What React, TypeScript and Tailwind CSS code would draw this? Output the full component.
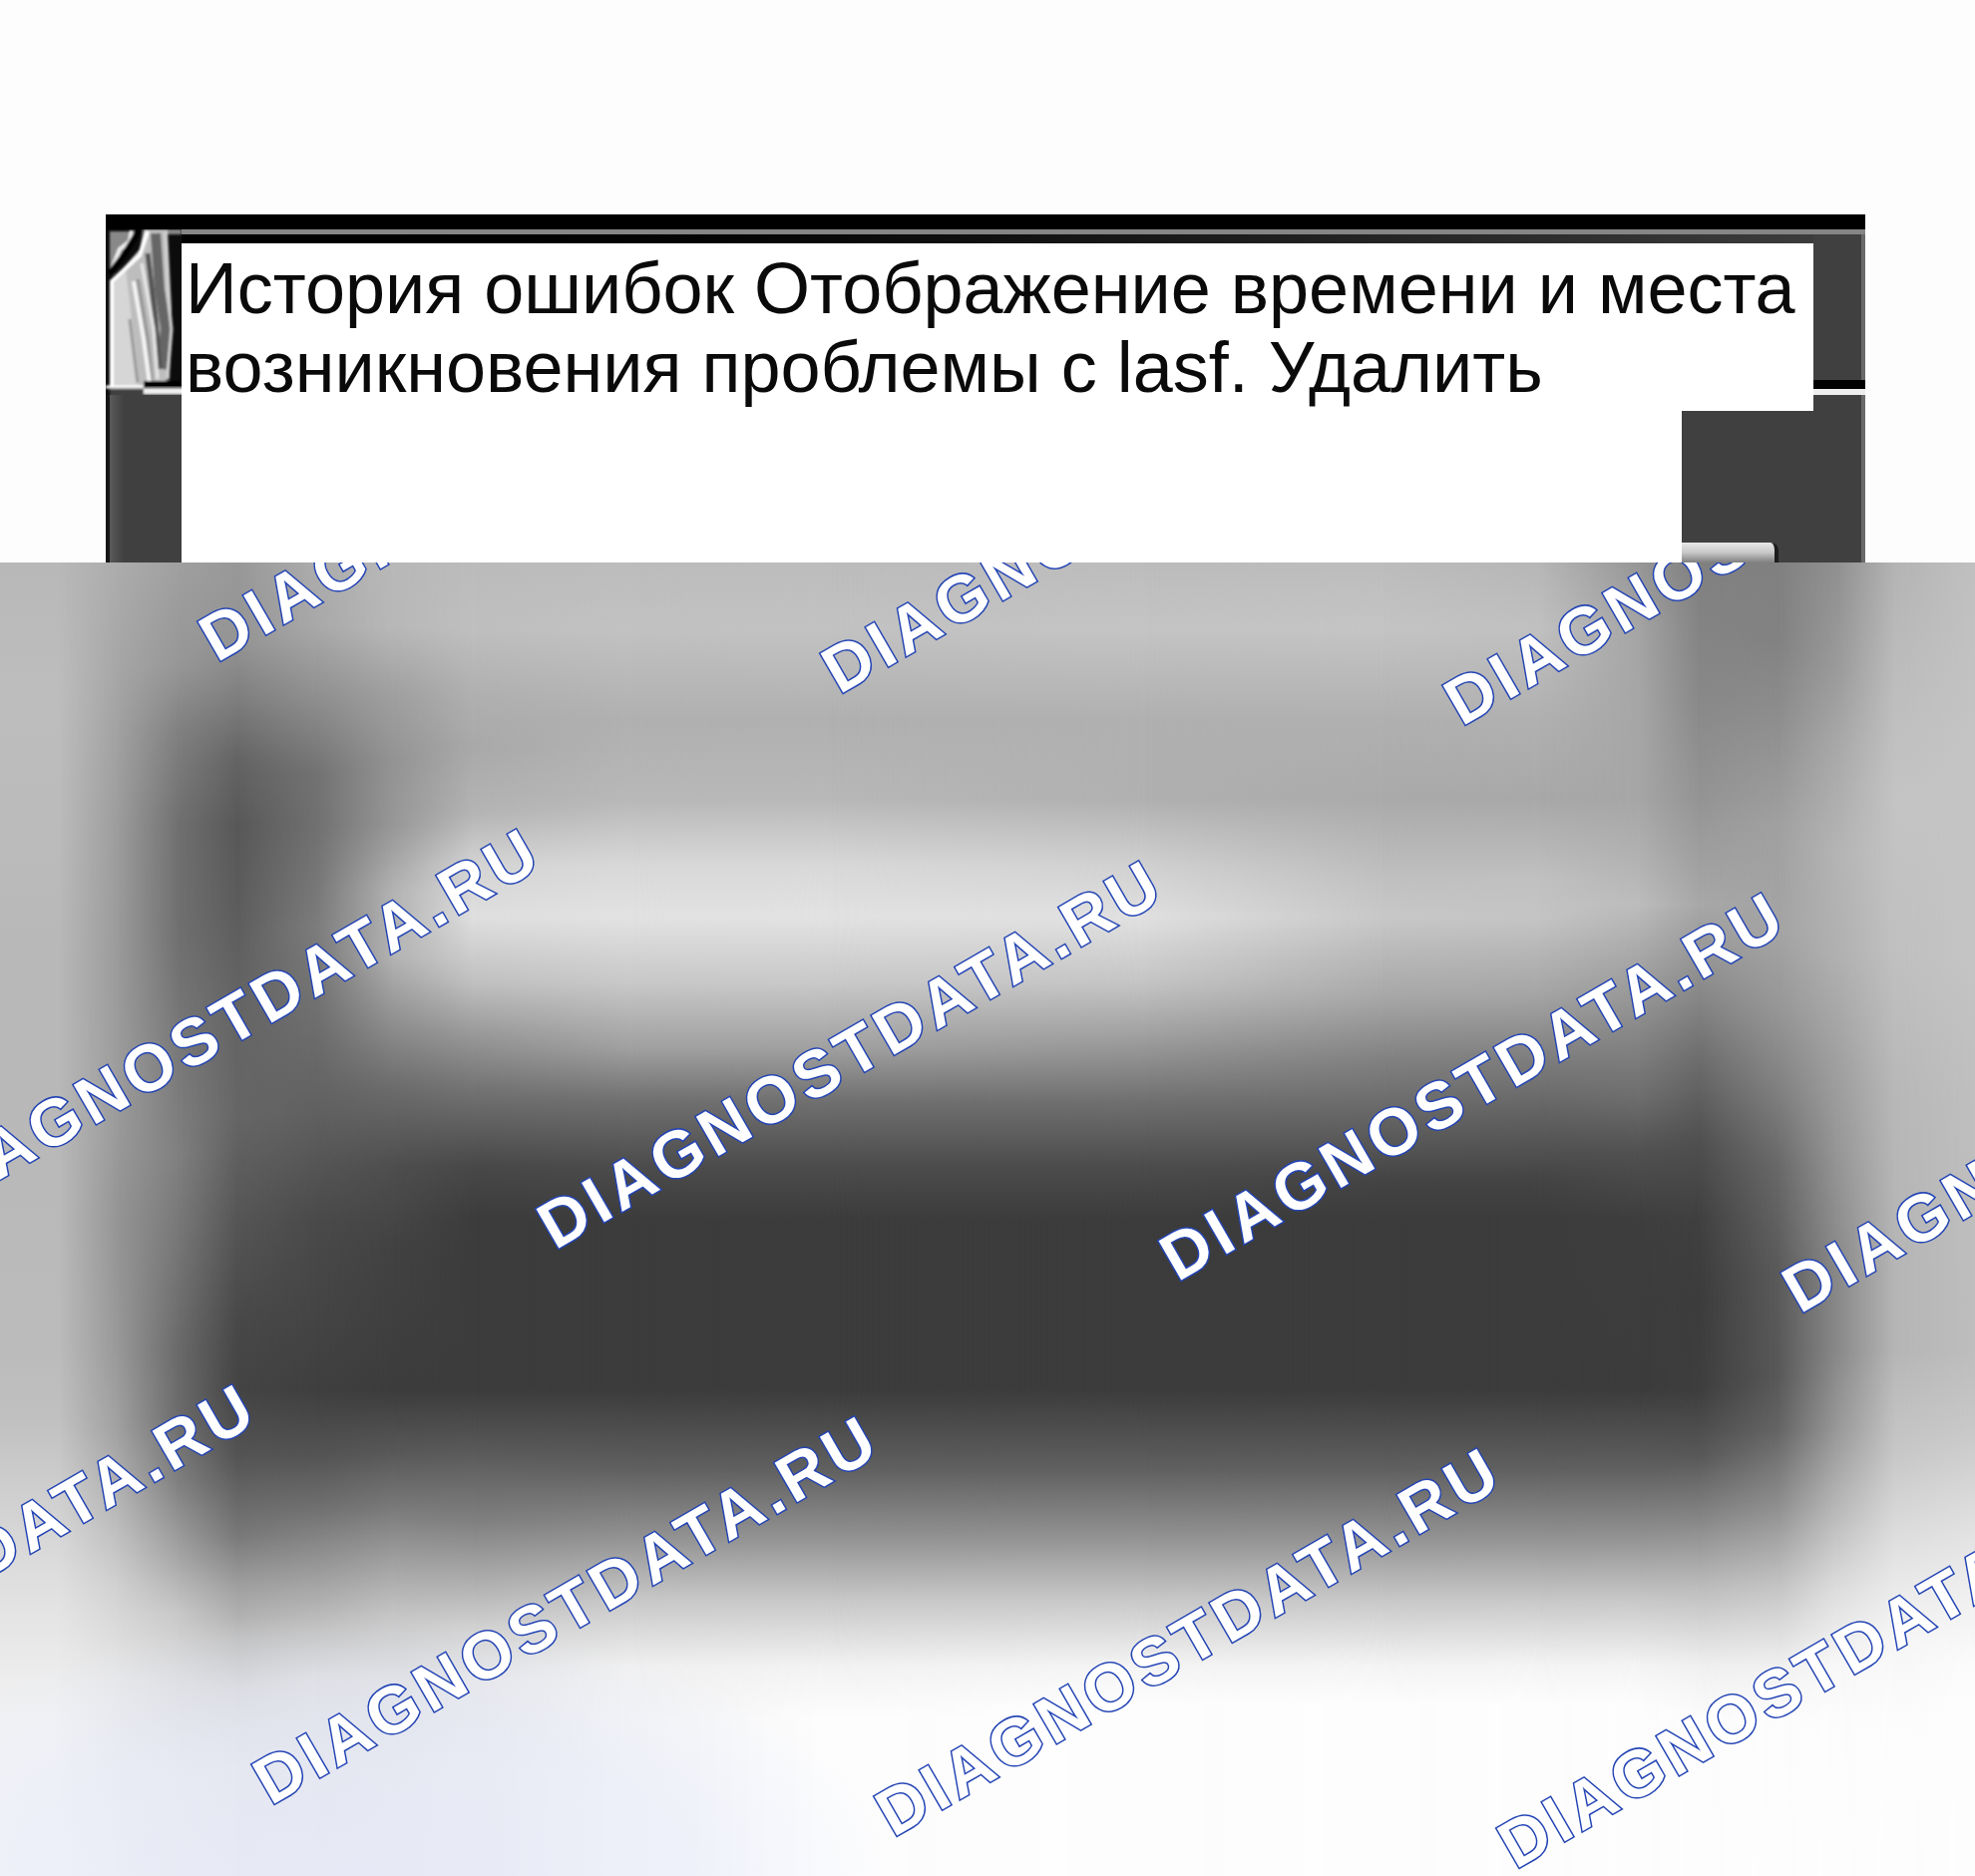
import React from 'react';

// columns of the blurred backdrop, each one fades in over the previous
const columns = [
  { from: 0, to: 0, stops: 'b8 0,bd 10,bb 20,b8 30,b8 40,bb 60,c0 65,d4 73,e4 80,f2 88,f4 100' },
  { from: 3, to: 6, stops: 'ac 0,a6 8,a0 14,9c 20,9a 30,9c 40,94 50,98 60,a0 66,ba 73,d0 78,e6 85,ec 92,ee 100' },
  { from: 6, to: 9, stops: 'a0 0,96 8,80 13,70 20,70 28,78 36,80 45,76 52,6a 60,6c 65,80 70,a8 76,c8 80,dc 85,e8 92,ea 100' },
  { from: 9, to: 12, stops: '98 0,94 6,80 10,64 15,58 20,5c 26,64 33,66 42,56 50,48 58,44 63,54 68,78 74,a0 78,c0 82,d8 86,e4 92,e8 100' },
  { from: 12, to: 16, stops: 'ac 0,a8 5,90 10,72 16,70 20,7c 28,70 34,60 42,4a 50,44 58,3f 63,54 68,70 72,94 76,b8 80,dc 85,e4 92,e8 100' },
  { from: 16, to: 20, stops: 'b8 0,b8 5,a0 10,94 15,98 20,b4 25,b4 30,90 35,6c 40,4e 46,42 52,3e 60,3c 63,5a 68,7a 72,a0 76,c4 80,de 85,e6 92,e8 100' },
  { from: 20, to: 24, stops: 'bb 0,bf 5,b0 10,a9 14,b4 19,d4 23,df 27,c0 32,98 36,74 40,48 46,3c 50,3c 63,5c 68,80 73,a8 77,d0 81,e6 85,ea 92,ea 100' },
  { from: 24, to: 32, stops: 'bc 0,c2 5,b0 12,b8 18,d8 23,e2 27,c8 32,a0 37,70 41,4c 46,3c 50,3c 63,60 69,90 74,c8 79,f0 84,f4 88,f4 100' },
  { from: 32, to: 42, stops: 'bc 0,c2 5,b0 12,b8 18,d8 23,e2 27,c8 32,a0 37,70 41,4c 46,3c 50,3c 63,60 69,90 74,c8 79,f2 84,fd 88,fd 100' },
  { from: 42, to: 58, stops: 'bc 0,c4 5,b0 12,b0 18,d0 23,e0 27,c4 32,a0 36,70 41,4c 46,3c 50,3c 63,60 69,90 74,c8 79,f4 84,fd 87,fd 100' },
  { from: 58, to: 70, stops: 'bc 0,c4 5,b0 12,aa 18,c0 24,c8 27,a8 33,80 38,60 43,44 47,3c 50,3c 63,60 69,90 74,c8 79,f4 84,fd 87,fd 100' },
  { from: 70, to: 78, stops: 'b6 0,c0 5,b0 12,a8 18,c0 24,c4 27,a4 33,7c 38,5c 43,44 47,3c 50,3c 63,60 69,90 74,c8 79,f4 84,fd 87,fd 100' },
  { from: 78, to: 83, stops: '96 0,a4 5,a6 12,a6 18,b0 22,bc 26,a2 31,86 36,6c 41,50 45,3e 50,3c 63,60 69,90 74,c8 79,f4 84,fd 87,fd 100' },
  { from: 83, to: 86, stops: '80 0,88 10,94 18,a8 26,8c 32,6c 38,50 44,40 50,3c 56,3e 63,58 68,88 73,bc 78,f0 84,fc 88,fd 100' },
  { from: 86, to: 90, stops: '80 0,82 6,8e 12,a0 20,a4 28,96 34,80 40,68 46,5a 54,58 62,64 66,90 72,c4 78,f0 84,fc 88,fd 100' },
  { from: 90, to: 93, stops: '90 0,9a 8,a8 14,b4 22,b0 30,a0 38,94 46,88 54,88 60,98 66,b8 72,dc 78,f8 84,fc 88,fd 100' },
  { from: 93, to: 96, stops: 'b4 0,bc 8,c4 18,c0 30,b8 40,b6 50,b6 60,c8 68,e4 76,f6 82,fc 88,fd 100' },
  { from: 96, to: 100, stops: 'c0 0,c4 15,c4 30,be 42,bd 60,c8 66,dc 72,ee 78,fb 84,fd 88,fd 100' },
];

const gradient = (stops: string) =>
  `linear-gradient(to bottom, ${stops
    .split(',')
    .map((s) => {
      const [c, p] = s.split(' ');
      return `#${c}${c}${c} ${p}%`;
    })
    .join(', ')})`;

const marks = [
  [217, 100], [841, 132], [1465, 164],
  [-68, 657], [556, 689], [1180, 721], [1804, 753],
  [-353, 1214], [271, 1246], [895, 1278], [1519, 1310],
];

const Fan: React.FC = () => (
  <svg className="block w-full" viewBox="0 0 76 166" fill="none" aria-hidden="true">
    <defs>
      <filter id="soft">
        <feGaussianBlur stdDeviation="0.8" />
      </filter>
    </defs>
    <rect width="76" height="166" fill="#0c0c0c" />
    <g filter="url(#soft)">
      <rect x="62" y="0" width="14" height="5" fill="#858585" />
      <path d="M4 2H28L26 12L8 34L4 40Z" fill="#888" />
      <path d="M26 1L24 12L14 20L6 40" stroke="#eee" strokeWidth="4" />
      <path d="M4 54L34 20L38 0H62L66 80L64 150L48 157H4Z" fill="#bdbdbd" />
      <path d="M4 56L20 40L34 157H4Z" fill="#d6d6d6" />
      <path d="M34 0L18 26L4 44" stroke="#050505" strokeWidth="6" />
      <path d="M6 157V52L34 26L42 2" stroke="#fff" strokeWidth="4" />
      <path d="M50 4L54 60L60 100L56 140" stroke="#666" strokeWidth="10" />
      <path d="M42 24L50 90L54 140" stroke="#555" strokeWidth="5" />
      <path d="M36 34L48 100L52 150" stroke="#e8e8e8" strokeWidth="3" />
      <path d="M32 50L42 110L46 152" stroke="#999" strokeWidth="4" />
      <path d="M28 52L38 110L44 154" stroke="#f5f5f5" strokeWidth="4" />
      <path d="M24 90L32 154" stroke="#999" strokeWidth="3" />
      <path d="M60 2L62 60L66 100L62 148" stroke="#d0d0d0" strokeWidth="3" />
      <path d="M38 155H80" stroke="#000" strokeWidth="6" />
      <path d="M0 158H38" stroke="#fff" strokeWidth="3" />
      <path d="M4 160H40V170H4Z" fill="#404040" />
      <path d="M38 159H80V165H38Z" fill="#f0f0f0" />
      <path d="M38 165H80V170H38Z" fill="#404040" />
    </g>
  </svg>
);

const Header: React.FC = () => (
  <header className="mr-[110px] ml-[106px] pt-[215px]">
    <div className="h-[15px] bg-black" />
    <div className="flex">
      <div className="flex w-[76px] flex-col">
        <Fan />
        <div className="grow border-l-4 border-[#161616] bg-linear-to-r from-[#5a5a5a] via-[#404040] via-20% to-[#404040]" />
      </div>
      <div className="min-w-0 grow">
        <div className="h-[5px] bg-[#858585]" />
        <div className="flex">
          <div className="grow">
            <div className="h-[9px] bg-linear-to-r from-black to-[#3c3c3c]" />
            <h1 className="h-[168px] pt-[6px] pl-1 text-[72px] leading-[79px] whitespace-nowrap bg-white text-[#0a0a0a]">
              История ошибок Отображение времени и места
              <br />
              возникновения проблемы с lasf. Удалить
            </h1>
          </div>
          <div className="flex w-[52px] flex-col bg-[#404040]">
            <div className="h-[146px] border-r-4 border-[#6a6a6a]" />
            <div className="h-[9px] bg-black" />
            <div className="h-[6px] bg-[#eee]" />
            <div className="grow border-r-4 border-[#6a6a6a]" />
          </div>
        </div>
        <div className="flex h-[152px]">
          <div className="grow bg-white" />
          <div className="flex w-[184px] flex-col justify-end border-r-4 border-[#6a6a6a] bg-[#404040]">
            <div className="h-5 w-[97px] rounded-tr-lg border-r-4 border-[#1c1c1c] bg-linear-to-b from-[#e8e8e8] via-[#c8c8c8] to-[#808080]" />
          </div>
        </div>
      </div>
    </div>
  </header>
);

const Backdrop: React.FC = () => (
  <section className="relative grow overflow-hidden">
    {columns.map((col, idx) => (
      <div
        key={idx}
        className="absolute inset-0"
        style={{
          backgroundImage: gradient(col.stops),
          maskImage: idx ? `linear-gradient(to right, transparent ${col.from}%, #000 ${col.to}%)` : undefined,
        }}
      />
    ))}
    <div className="absolute inset-0 bg-[radial-gradient(28%_20%_at_18%_100%,rgb(230_235_255/0.6),rgb(230_235_255/0.45)_60%,transparent)]" />
    {marks.map(([x, y], idx) => (
      <span
        key={idx}
        className="absolute origin-bottom-left -rotate-30 text-[66px] leading-[44px] font-bold tracking-[5px] whitespace-nowrap text-white [paint-order:stroke_fill] [-webkit-text-stroke:3px_#2344b4]"
        style={{ left: x, bottom: `calc(100% - ${y}px)` }}
      >
        DIAGNOSTDATA.RU
      </span>
    ))}
  </section>
);

export default function App() {
  return (
    <main className="flex min-h-screen flex-col overflow-hidden bg-[#fdfdfd] font-['Liberation_Sans',Arial,sans-serif]">
      <Header />
      <Backdrop />
    </main>
  );
}
